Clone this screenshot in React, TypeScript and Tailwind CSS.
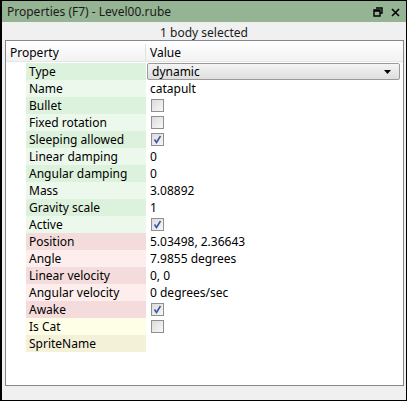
import React from 'react';

type Row = {
  label: string;
  tone: 'g1' | 'g2' | 'r1' | 'r2' | 'y1' | 'y2';
  kind?: 'text' | 'check' | 'select';
  value?: string;
  checked?: boolean;
};

const ROWS: Row[] = [
  { label: 'Type', tone: 'g1', kind: 'select', value: 'dynamic' },
  { label: 'Name', tone: 'g2', value: 'catapult' },
  { label: 'Bullet', tone: 'g1', kind: 'check' },
  { label: 'Fixed rotation', tone: 'g2', kind: 'check' },
  { label: 'Sleeping allowed', tone: 'g1', kind: 'check', checked: true },
  { label: 'Linear damping', tone: 'g2', value: '0' },
  { label: 'Angular damping', tone: 'g1', value: '0' },
  { label: 'Mass', tone: 'g2', value: '3.08892' },
  { label: 'Gravity scale', tone: 'g1', value: '1' },
  { label: 'Active', tone: 'g2', kind: 'check', checked: true },
  { label: 'Position', tone: 'r1', value: '5.03498, 2.36643' },
  { label: 'Angle', tone: 'r2', value: '7.9855 degrees' },
  { label: 'Linear velocity', tone: 'r1', value: '0, 0' },
  { label: 'Angular velocity', tone: 'r2', value: '0 degrees/sec' },
  { label: 'Awake', tone: 'r1', kind: 'check', checked: true },
  { label: 'Is Cat', tone: 'y1', kind: 'check' },
  { label: 'SpriteName', tone: 'y2', value: '' },
];

const TONES: Record<Row['tone'], string> = {
  g1: 'bg-[#ddf2dd]',
  g2: 'bg-[#ebf8eb]',
  r1: 'bg-[#f5dcdc]',
  r2: 'bg-[#fdeded]',
  y1: 'bg-[#fefde6]',
  y2: 'bg-[#f4f1d9]',
};

const CheckBox = ({ checked }: { checked?: boolean }) => (
  <div className="flex h-[13px] w-[13px] items-center justify-center border border-[#8f8f8f] bg-gradient-to-br from-[#dcdcdc] to-[#f7f7f7]">
    {checked && (
      <svg width="9" height="9" viewBox="0 0 9 9">
        <path d="M1.5 4.5 L3.5 7.5 L7.5 1" fill="none" stroke="#3c56a8" strokeWidth="1.6" />
      </svg>
    )}
  </div>
);

const Value = ({ row }: { row: Row }) => {
  if (row.kind === 'check') {
    return (
      <div className="pl-[4px]">
        <CheckBox checked={row.checked} />
      </div>
    );
  }
  if (row.kind === 'select') {
    return (
      <div className="flex h-[17px] flex-1 items-center justify-between rounded-[2px] border border-[#9a9a9a] bg-gradient-to-b from-[#f4f4f4] to-[#dedede] pl-[4px] pr-[8px]">
        <span>{row.value}</span>
        <svg width="7" height="4" viewBox="0 0 7 4">
          <path d="M0 0 H7 L3.5 4 Z" fill="#000" />
        </svg>
      </div>
    );
  }
  return <span className="pl-[3px]">{row.value}</span>;
};

export default function App() {
  return (
    <div
      className="flex h-[401px] w-[407px] flex-col border border-l-2 border-black bg-[#f0f0f0] text-[12px] text-black"
      style={{ fontFamily: '"Noto Sans", "Open Sans", sans-serif' }}
    >
      <div className="flex h-[21px] shrink-0 items-center justify-between bg-[#94b494] pl-[5px] pr-[6px] pt-[1px]">
        <span className="text-[#1a1a1a]">Properties (F7) - Level00.rube</span>
        <div className="flex items-center gap-[8px]">
          <svg width="10" height="10" viewBox="0 0 10 10">
            <path d="M3 1 H9 V6 H7 M1 3 H7 V9 H1 Z M1 4 H7" fill="none" stroke="#000" strokeWidth="1.4" />
          </svg>
          <svg width="9" height="9" viewBox="0 0 9 9">
            <path d="M1 1 L8 8 M8 1 L1 8" stroke="#000" strokeWidth="1.6" />
          </svg>
        </div>
      </div>
      <div className="flex h-[18px] shrink-0 items-center justify-center pt-[4px] text-[#1a1a1a]">
        1 body selected
      </div>
      <div className="mb-[14px] ml-[3px] mr-[2px] flex flex-1 flex-col border border-[#828790] bg-white">
        <div className="flex h-[21px] shrink-0 items-center border-b border-[#e5e5e5] bg-gradient-to-b from-white to-[#f2f2f2] pt-[3px]">
          <div className="flex h-full w-[140px] items-center border-r border-[#e0e0e0] pl-[4px]">Property</div>
          <div className="pl-[4px]">Value</div>
        </div>
        <div className="flex flex-col pt-[1px]">
          {ROWS.map((row) => (
            <div key={row.label} className="flex h-[17px] items-center">
              <div className="w-[20px] shrink-0" />
              <div className={`flex h-full w-[120px] shrink-0 items-center pl-[3px] ${TONES[row.tone]}`}>
                {row.label}
              </div>
              <div className="flex h-full flex-1 items-center pl-[1px] pr-[3px]">
                <Value row={row} />
              </div>
            </div>
          ))}
        </div>
      </div>
    </div>
  );
}
